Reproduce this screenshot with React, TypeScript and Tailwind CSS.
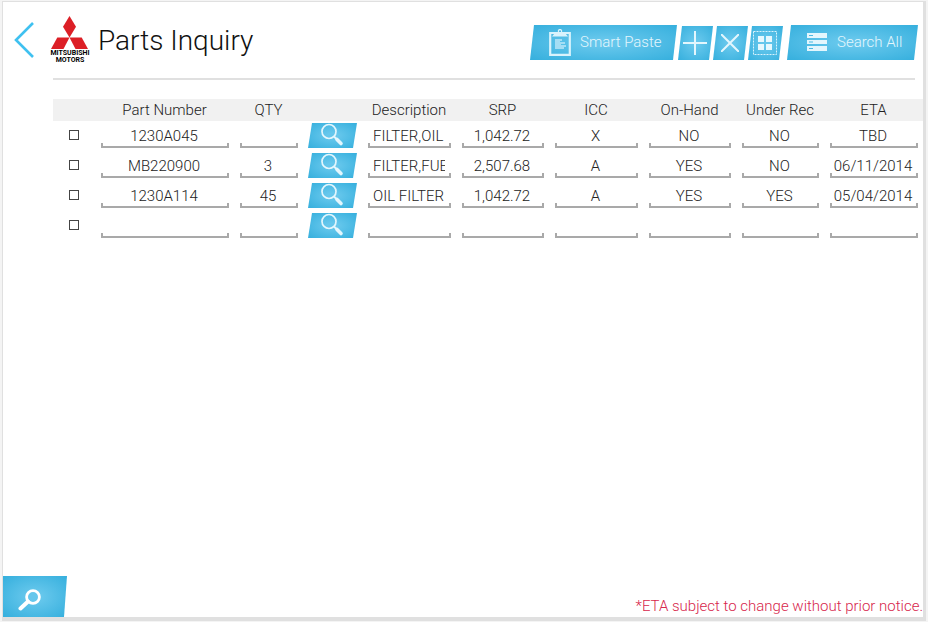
import type { ReactNode } from "react";

type Part = {
  part: string;
  qty: string;
  description: string;
  srp: string;
  icc: string;
  onHand: string;
  underRec: string;
  eta: string;
};

const parts: Part[] = [
  { part: "1230A045", qty: "", description: "FILTER,OIL", srp: "1,042.72", icc: "X", onHand: "NO", underRec: "NO", eta: "TBD" },
  { part: "MB220900", qty: "3", description: "FILTER,FUEL", srp: "2,507.68", icc: "A", onHand: "YES", underRec: "NO", eta: "06/11/2014" },
  { part: "1230A114", qty: "45", description: "OIL FILTER", srp: "1,042.72", icc: "A", onHand: "YES", underRec: "YES", eta: "05/04/2014" },
  { part: "", qty: "", description: "", srp: "", icc: "", onHand: "", underRec: "", eta: "" },
];

const blue = "bg-[radial-gradient(ellipse_at_center,#66c7ec_15%,#35afdd_100%)] text-[#e3f6fd]";
const slant = "[clip-path:polygon(4px_0,100%_0,calc(100%-4px)_100%,0_100%)]";

function ActionButton({ className, label, children }: { className: string; label: string; children: ReactNode }) {
  return (
    <button type="button" aria-label={label} className={`flex shrink-0 items-center ${blue} ${slant} ${className}`}>
      {children}
    </button>
  );
}

function Field({ value, label, left }: { value: string; label: string; left?: boolean }) {
  return (
    <td className="pt-[2px] pr-[5px] pb-[3px] pl-[6px]">
      <div className="flex h-[25px] flex-col">
        <div className={`h-5 pt-[3px] ${left ? "pr-[6px] pl-[5px]" : "pr-[5px] pl-[3px]"}`}>
          <input
            aria-label={label}
            defaultValue={value}
            className={`block h-5 w-full bg-transparent text-[15px] leading-5 text-[#222] outline-none ${left ? "text-left" : "text-center"}`}
          />
        </div>
        <div className="h-[5px] border-x-2 border-b-2 border-[#a9a9a9]" />
      </div>
    </td>
  );
}

function Logo() {
  return (
    <div className="flex w-[38px] flex-col items-center">
      <svg width="38" height="34" viewBox="0 0 38 34" fill="#dc1f26" aria-hidden="true">
        <path d="M18.5 0 25 10.8 18.5 21.6 12 10.8Z" />
        <path d="M18.5 21.6 12.5 33H0L6.3 21.6Z" />
        <path d="M18.5 21.6 24.5 33H37L30.7 21.6Z" />
      </svg>
      <div className="text-center font-['Roboto',sans-serif] text-[7px] leading-[7px] font-bold text-black">
        MITSUBISHI
        <br />
        MOTORS
      </div>
    </div>
  );
}

export default function App() {
  return (
    <div className="flex min-h-screen bg-[#f4f4f4] pt-px pr-[2px] pb-px pl-[2px] font-['Roboto',sans-serif] font-light">
      <main className="flex min-w-0 grow flex-col border-t border-r-[3px] border-b-4 border-l border-[#e0e0e0] bg-white">
        <header className="flex items-start justify-between pr-[5px]">
          <div className="flex pt-[14px] pl-[11px]">
            <button type="button" aria-label="Back" className="mt-[6px] mr-[17px] h-9">
              <svg width="20" height="36" viewBox="0 0 20 36" fill="none" aria-hidden="true">
                <path d="M19 1 2 18l17 17" stroke="#3fc1f0" strokeWidth="2.6" />
              </svg>
            </button>
            <Logo />
            <h1 className="ml-[9px] text-[28px] leading-[50px] text-[#111]">Parts Inquiry</h1>
          </div>
          <div className="flex items-end pt-[23px]">
            <ActionButton label="Smart Paste" className="h-[35px] w-[147px] pl-[19px]">
              <svg width="22" height="28" viewBox="0 0 22 28" fill="none" aria-hidden="true">
                <path d="M1.2 4h19.6v21.8H1.2Z" stroke="#d9f3fc" strokeWidth="2.2" />
                <path fillRule="evenodd" fill="#d9f3fc" d="M3 7.5 5.5 4.5 9 3a2.2 2.2 0 1 1 4 0l3.5 1.5L19 7.5ZM10 1.6h2v1.6h-2Z" />
                <path fill="#a5def4" d="M6 10h7v2h-2v1h5v2h-4v1h5v2h-2v2H6Z" />
              </svg>
              <span className="mb-[2px] ml-[9px] text-[15px] leading-5">Smart Paste</span>
            </ActionButton>
            <ActionButton label="Add row" className="ml-px h-[34px] w-[35px] justify-center pr-px">
              <svg width="24" height="24" viewBox="0 0 24 24" stroke="currentColor" strokeWidth="2" aria-hidden="true">
                <path d="M0 12h24M12 0v24" />
              </svg>
            </ActionButton>
            <ActionButton label="Remove row" className="h-[34px] w-[35px] justify-center pr-px">
              <svg width="18" height="18" viewBox="0 0 18 18" stroke="currentColor" strokeWidth="2" aria-hidden="true">
                <path d="m0 0 18 18M18 0 0 18" />
              </svg>
            </ActionButton>
            <ActionButton label="Select all" className="h-[34px] w-[35px] justify-center pr-px">
              <svg width="24" height="24" viewBox="0 0 24 24" aria-hidden="true">
                <path d="M.5.5h23v23H.5Z" fill="none" stroke="#d9f3fc" strokeDasharray="2 1" />
                <path d="M5 5h6v6H5ZM13 5h6v6h-6ZM5 13h6v6H5ZM13 13h6v6h-6Z" fill="#e6f8fe" />
              </svg>
            </ActionButton>
            <ActionButton label="Search All" className="ml-1 h-[35px] w-[131px] pl-5">
              <svg width="20" height="18" viewBox="0 0 20 18" fill="#e3f6fd" className="mb-px" aria-hidden="true">
                <path d="M0 0h20v5H0ZM0 7h20v4H0ZM0 13h20v5H0Z" />
                <path d="M2 2h4v1H2ZM2 8.5h4v1H2ZM2 15h4v1H2Z" fill="#4db9e2" />
              </svg>
              <span className="mb-[2px] ml-[10px] text-[15px] leading-5">Search All</span>
            </ActionButton>
          </div>
        </header>
        <hr className="mt-3 mr-2 ml-[50px] border-t-2 border-[#e0e0e0]" />
        <div className="mt-[19px] pl-[50px]">
          <table className="w-full table-fixed border-collapse text-[15px] leading-5 text-[#222]">
            <colgroup>
              <col className="w-[42px]" />
              <col className="w-[139px]" />
              <col className="w-[69px]" />
              <col className="w-[59px]" />
              <col className="w-[94px]" />
              <col className="w-[93px]" />
              <col className="w-[94px]" />
              <col className="w-[93px]" />
              <col className="w-[88px]" />
              <col className="w-[99px]" />
            </colgroup>
            <thead>
              <tr className="h-[22px] bg-[#f1f1f1]">
                {["", "Part Number", "QTY", "", "Description", "SRP", "ICC", "On-Hand", "Under Rec", "ETA"].map((name, i) => (
                  <th key={i} scope="col" className="p-0 text-center font-light whitespace-nowrap">
                    {name}
                  </th>
                ))}
              </tr>
            </thead>
            <tbody>
              {parts.map((row, i) => (
                <tr key={i} className="h-[30px]">
                  <td className="p-0 pb-[2px]">
                    <input
                      type="checkbox"
                      aria-label={`Select row ${i + 1}`}
                      className="mx-auto block size-[10px] appearance-none border border-[#444] bg-white checked:bg-[#3fb3df]"
                    />
                  </td>
                  <Field label="Part number" value={row.part} />
                  <Field label="Quantity" value={row.qty} />
                  <td className="px-[5px] pt-[2px] pb-[3px]">
                    <button type="button" aria-label="Look up part" className={`flex h-[25px] w-full justify-center pr-[2px] ${blue} ${slant}`}>
                      <svg width="24" height="24" viewBox="0 0 24 24" fill="none" stroke="currentColor" aria-hidden="true">
                        <circle cx="9" cy="8.5" r="7" strokeWidth="1.7" />
                        <path d="m14 13.5 3 3" strokeWidth="2" />
                        <path d="m17 16.5 4 4" strokeWidth="3.6" strokeLinecap="round" />
                      </svg>
                    </button>
                  </td>
                  <Field label="Description" value={row.description} left />
                  <Field label="SRP" value={row.srp} />
                  <Field label="ICC" value={row.icc} />
                  <Field label="On-Hand" value={row.onHand} />
                  <Field label="Under Rec" value={row.underRec} />
                  <Field label="ETA" value={row.eta} />
                </tr>
              ))}
            </tbody>
          </table>
        </div>
        <footer className="mt-auto flex items-end justify-between">
          <button
            type="button"
            aria-label="Search"
            className={`h-[41px] w-16 pl-[15px] ${blue} [clip-path:polygon(0_0,100%_0,calc(100%-3px)_100%,0_100%)]`}
          >
            <svg width="24" height="24" viewBox="0 0 24 24" fill="none" stroke="white" className="mt-[7px]" aria-hidden="true">
              <circle cx="15" cy="9" r="6.4" strokeWidth="2.8" />
              <path d="m10 13.5-7.5 7" strokeWidth="4" strokeLinecap="round" />
            </svg>
          </button>
          <p className="mb-px text-[15px] leading-5 text-[#d7264c]">*ETA subject to change without prior notice.</p>
        </footer>
      </main>
    </div>
  );
}
